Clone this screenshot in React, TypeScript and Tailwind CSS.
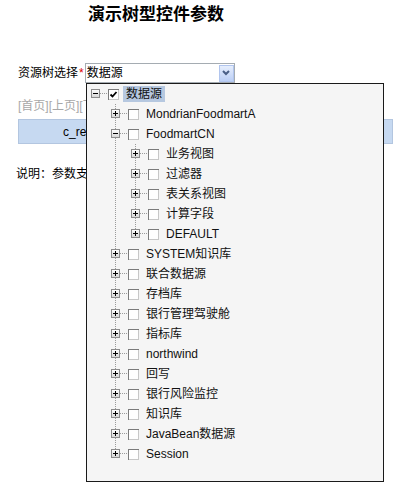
import React from "react";

type Node = {
  label: string;
  level: number;
  open?: boolean;
  checked?: boolean;
  selected?: boolean;
  last?: boolean;
  // which ancestor columns keep a vertical guide line
  guides: boolean[];
};

const nodes: Node[] = [
  { label: "数据源", level: 0, open: true, checked: true, selected: true, last: true, guides: [] },
  { label: "MondrianFoodmartA", level: 1, guides: [false] },
  { label: "FoodmartCN", level: 1, open: true, guides: [false] },
  { label: "业务视图", level: 2, guides: [false, true] },
  { label: "过滤器", level: 2, guides: [false, true] },
  { label: "表关系视图", level: 2, guides: [false, true] },
  { label: "计算字段", level: 2, guides: [false, true] },
  { label: "DEFAULT", level: 2, last: true, guides: [false, true] },
  { label: "SYSTEM知识库", level: 1, guides: [false] },
  { label: "联合数据源", level: 1, guides: [false] },
  { label: "存档库", level: 1, guides: [false] },
  { label: "银行管理驾驶舱", level: 1, guides: [false] },
  { label: "指标库", level: 1, guides: [false] },
  { label: "northwind", level: 1, guides: [false] },
  { label: "回写", level: 1, guides: [false] },
  { label: "银行风险监控", level: 1, guides: [false] },
  { label: "知识库", level: 1, guides: [false] },
  { label: "JavaBean数据源", level: 1, guides: [false] },
  { label: "Session", level: 1, last: true, guides: [false] },
];

const GuideCell = ({ on }: { on: boolean }) => (
  <svg width="20" height="20" className="shrink-0">
    {on && <line x1="4.5" y1="0" x2="4.5" y2="20" stroke="#9a9a9a" strokeDasharray="1 1" />}
  </svg>
);

const Switch = ({ open, last, root }: { open?: boolean; last?: boolean; root?: boolean }) => (
  <svg width="17" height="20" className="shrink-0">
    <defs>
      <linearGradient id="sw" x1="0" y1="0" x2="0" y2="1">
        <stop offset="0" stopColor="#ffffff" />
        <stop offset="1" stopColor="#d4d4d4" />
      </linearGradient>
    </defs>
    {!root && (
      <line x1="4.5" y1="0" x2="4.5" y2={last ? 10 : 20} stroke="#9a9a9a" strokeDasharray="1 1" />
    )}
    <line x1="9" y1="9.5" x2="17" y2="9.5" stroke="#9a9a9a" strokeDasharray="1 1" />
    <rect x="0.5" y="5.5" width="8" height="8" fill="url(#sw)" stroke="#8c8c8c" />
    <line x1="2" y1="9.5" x2="7" y2="9.5" stroke="#000" />
    {!open && <line x1="4.5" y1="7" x2="4.5" y2="12" stroke="#000" />}
  </svg>
);

const Check = ({ checked }: { checked?: boolean }) => (
  <svg width="11" height="11" className="shrink-0">
    <rect x="0" y="0" width="11" height="11" fill="#ffffff" />
    <line x1="0.5" y1="0" x2="0.5" y2="11" stroke="#7a7a7a" />
    <line x1="0" y1="0.5" x2="11" y2="0.5" stroke="#7a7a7a" />
    <line x1="10.5" y1="1" x2="10.5" y2="11" stroke="#c8c8c8" />
    <line x1="1" y1="10.5" x2="11" y2="10.5" stroke="#c8c8c8" />
    {checked && (
      <path d="M2.5 5.5 L4.5 7.5 L8.5 3" fill="none" stroke="#000" strokeWidth="1.8" />
    )}
  </svg>
);

const TreeRow = ({ node }: { node: Node }) => (
  <div className="flex h-[20px] items-center pl-[4px]">
    {node.guides.map((g, i) => (
      <GuideCell key={i} on={g} />
    ))}
    <Switch open={node.open} last={node.last} root={node.level === 0} />
    <Check checked={node.checked} />
    <span
      className={
        "ml-[4px] h-[16px] px-[3px] text-[12px] leading-[16px] whitespace-nowrap text-[#111] " +
        (node.selected ? "bg-[#b6c8e0]" : "")
      }
    >
      {node.label}
    </span>
  </div>
);

const App = () => {
  return (
    <div className="relative h-[489px] w-[393px] overflow-hidden bg-white font-['Liberation_Sans','Noto_Sans_CJK_SC',sans-serif] text-black">
      <h1 className="pl-[88px] pt-[6px] text-[17px] leading-[18px] font-bold">演示树型控件参数</h1>

      <div className="ml-[18px] mt-[39px] flex h-[20px] items-center">
        <span className="text-[12px] leading-[14px]">资源树选择</span>
        <span className="ml-[1px] text-[12px] leading-[14px] text-[#d00]">*</span>
        <div className="ml-[1px] flex h-[20px] w-[150px] items-center justify-between border border-[#a5acb2] bg-white">
          <span className="pl-[1px] text-[12px] leading-[14px]">数据源</span>
          <div className="flex h-[17px] w-[15px] items-center justify-center border border-[#b1c5ee] bg-linear-to-b from-[#e6eefd] to-[#bccff5]">
            <svg width="8" height="6" viewBox="0 0 8 6">
              <path d="M1 1 L4 4 L7 1" fill="none" stroke="#4a5f86" strokeWidth="2" />
            </svg>
          </div>
        </div>
      </div>

      <div className="ml-[18px] mt-[16px] text-[12px] leading-[14px] text-[#a8a8a8]">[首页][上页][下页][尾页]</div>

      <div className="ml-[18px] mt-[6px] flex h-[25px] items-center border border-[#b3c6e0] bg-[#c6d9f1] pl-[44px] text-[12px]">
        c_resource_name
      </div>

      <p className="ml-[16px] mt-[23px] text-[12px] leading-[14px]">说明：参数支持多选，可级联</p>

      <div className="absolute left-[86px] top-[83px] h-[399px] w-[298px] border border-[#1a1a1a] bg-[#f5f5f5]">
        {nodes.map((n, i) => (
          <TreeRow key={i} node={n} />
        ))}
      </div>
    </div>
  );
};

export default App;
